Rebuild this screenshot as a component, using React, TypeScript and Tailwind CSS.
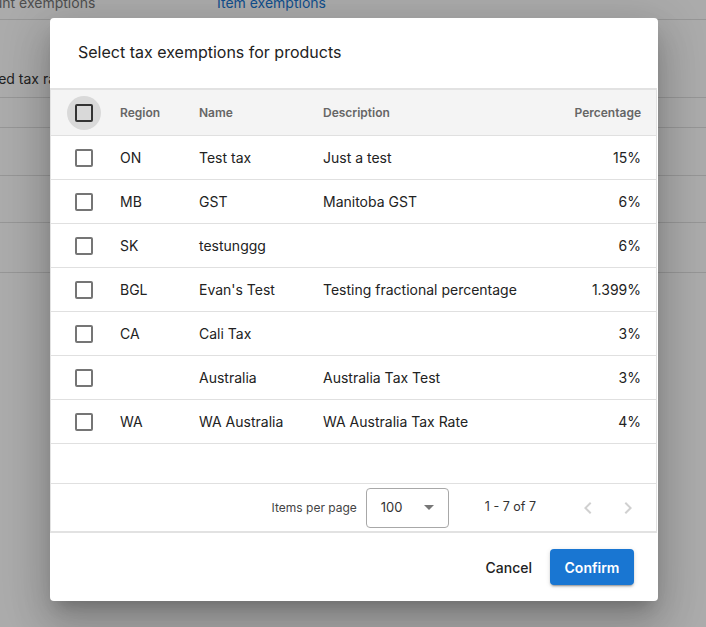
const rows = [
  { region: "ON", name: "Test tax", description: "Just a test", percentage: "15%" },
  { region: "MB", name: "GST", description: "Manitoba GST", percentage: "6%" },
  { region: "SK", name: "testunggg", description: "", percentage: "6%" },
  { region: "BGL", name: "Evan's Test", description: "Testing fractional percentage", percentage: "1.399%" },
  { region: "CA", name: "Cali Tax", description: "", percentage: "3%" },
  { region: "", name: "Australia", description: "Australia Tax Test", percentage: "3%" },
  { region: "WA", name: "WA Australia", description: "WA Australia Tax Rate", percentage: "4%" },
];

function Checkbox({ dark }: { dark?: boolean }) {
  return (
    <div
      className={`w-[18px] h-[18px] rounded-[2px] border-2 ${dark ? "border-[#333]" : "border-[#757575]"}`}
    />
  );
}

function Chevron({ dir }: { dir: "left" | "right" }) {
  return (
    <svg width="24" height="24" viewBox="0 0 24 24" className="text-[#d0d0d0]">
      <path
        d={dir === "left" ? "M15.41 7.41 14 6l-6 6 6 6 1.41-1.41L10.83 12z" : "M10 6 8.59 7.41 13.17 12l-4.58 4.59L10 18l6-6z"}
        fill="currentColor"
      />
    </svg>
  );
}

export default function App() {
  return (
    <div
      className="relative w-full h-screen overflow-hidden bg-white text-[#222]"
      style={{ fontFamily: "Inter, 'Noto Sans', sans-serif" }}
    >
      {/* page behind the dialog */}
      <div className="flex flex-col">
        <div className="flex h-[20px] border-b border-[#e0e0e0] text-[14px] leading-none">
          <div className="-ml-[40px] w-[210px] -mt-[4px] text-[#757575]">Account exemptions</div>
          <div className="ml-[47px] -mt-[4px] text-[#1976d2]">Item exemptions</div>
        </div>
        <div className="h-[78px] border-b border-[#e0e0e0] pt-[52px] text-[14px] leading-none">
          <span className="-ml-[51px] text-[#333]">Exempted tax rates</span>
        </div>
        <div className="h-[30px] border-b border-[#e0e0e0]" />
        <div className="h-[48px] border-b border-[#e0e0e0]" />
        <div className="h-[47px] border-b border-[#e0e0e0]" />
        <div className="h-[50px] border-b border-[#e0e0e0]" />
      </div>

      {/* backdrop */}
      <div className="absolute inset-0 bg-black/[0.33]" />

      {/* dialog */}
      <div className="absolute left-[50px] top-[18px] w-[608px] h-[583px] bg-white rounded-[4px] flex flex-col shadow-[0_11px_15px_-7px_rgba(0,0,0,0.2),0_24px_38px_3px_rgba(0,0,0,0.14),0_9px_46px_8px_rgba(0,0,0,0.12)]">
        <div className="h-[70px] flex items-center px-[28px] pb-[2px] text-[16px] text-[#222]">
          Select tax exemptions for products
        </div>

        <div className="mr-[1px] border-t-2 border-b-2 border-x border-[#e2e2e2] flex flex-col">
          <div className="h-[46px] bg-[#f4f4f4] border-b border-[#e0e0e0] flex items-center text-[12px] font-semibold text-[#666]">
            <div className="w-[66px] flex justify-center">
              <div className="w-[34px] h-[34px] rounded-full bg-[#d9d9d9] flex items-center justify-center">
                <Checkbox dark />
              </div>
            </div>
            <div className="w-[82px] pl-[3px]">Region</div>
            <div className="w-[124px]">Name</div>
            <div className="flex-1">Description</div>
            <div className="pr-[15px]">Percentage</div>
          </div>

          {rows.map((r) => (
            <div
              key={r.name}
              className="h-[44px] border-b border-[#e0e0e0] flex items-center text-[14px] text-[#222]"
            >
              <div className="w-[66px] flex justify-center">
                <Checkbox />
              </div>
              <div className="w-[82px] pl-[3px]">{r.region}</div>
              <div className="w-[124px]">{r.name}</div>
              <div className="flex-1">{r.description}</div>
              <div className="pr-[15px]">{r.percentage}</div>
            </div>
          ))}

          <div className="h-[40px] border-b border-[#e0e0e0]" />

          <div className="h-[47px] flex items-center justify-end text-[12px] text-[#444]">
            <span className="mr-[9px]">Items per page</span>
            <div className="w-[83px] h-[40px] border border-[#a8a8a8] rounded-[4px] flex items-center pl-[14px] pr-[14px] text-[13px] text-[#333]">
              <span className="flex-1">100</span>
              <div className="w-0 h-0 border-l-[5px] border-r-[5px] border-t-[5px] border-l-transparent border-r-transparent border-t-[#777]" />
            </div>
            <span className="ml-[36px] mr-[32px] text-[12.5px] text-[#333]">1 - 7 of 7</span>
            <div className="w-[40px] flex justify-center">
              <Chevron dir="left" />
            </div>
            <div className="w-[40px] flex justify-center mr-[8px]">
              <Chevron dir="right" />
            </div>
          </div>
        </div>

        <div className="flex-1 flex items-center justify-end pr-[24px] gap-[18px]">
          <button className="text-[14px] font-medium text-[#222]">Cancel</button>
          <button className="w-[84px] h-[36px] rounded-[4px] bg-[#1976d2] text-white text-[14px] font-semibold shadow-[0_3px_1px_-2px_rgba(0,0,0,0.2),0_2px_2px_0_rgba(0,0,0,0.14),0_1px_5px_0_rgba(0,0,0,0.12)]">
            Confirm
          </button>
        </div>
      </div>
    </div>
  );
}
